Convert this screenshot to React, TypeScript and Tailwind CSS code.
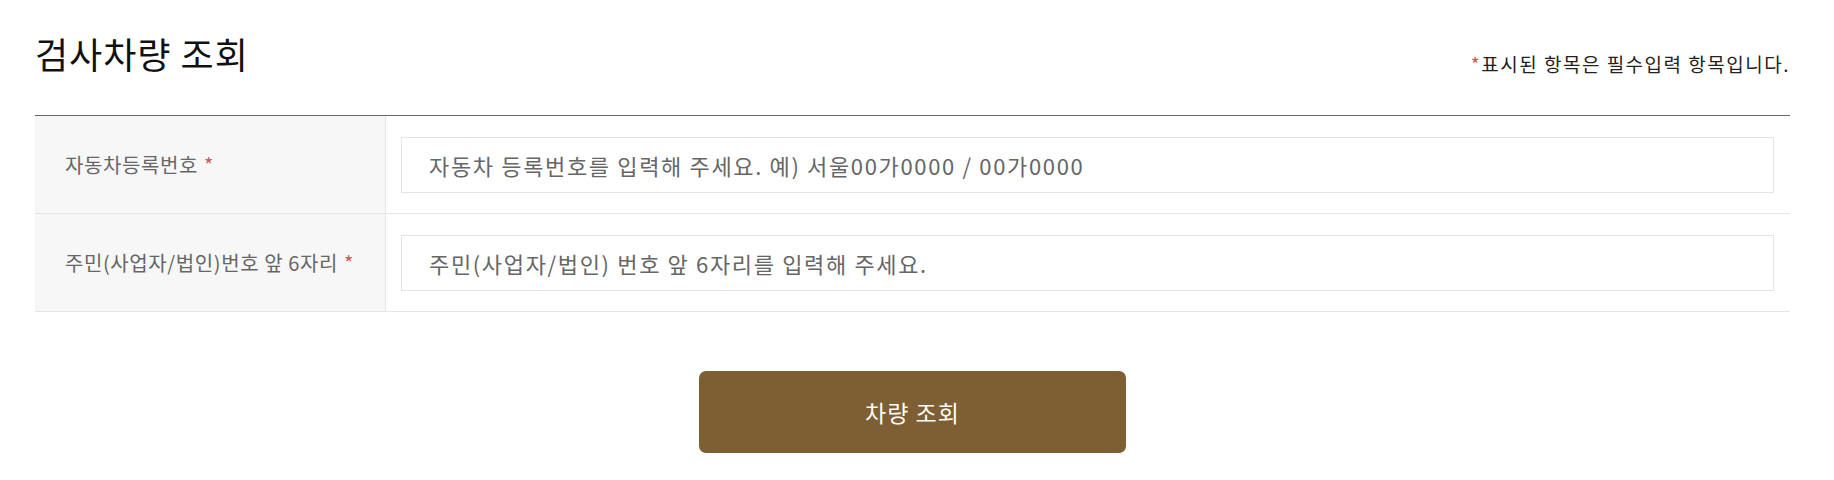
export default function App() {
  const font = { fontFamily: '"Noto Sans CJK KR", "Noto Sans", sans-serif' };

  const rows = [
    {
      label: "자동차등록번호",
      placeholder: "자동차 등록번호를 입력해 주세요. 예) 서울00가0000 / 00가0000",
    },
    {
      label: "주민(사업자/법인)번호 앞 6자리",
      placeholder: "주민(사업자/법인) 번호 앞 6자리를 입력해 주세요.",
    },
  ];

  return (
    <div className="w-[1834px] h-[480px] bg-white" style={font}>
      <div className="ml-[35px] w-[1755px] pt-[30px]">
        {/* Header */}
        <div className="flex items-start justify-between h-[85px]">
          <h2 className="text-[36px] leading-[46px] text-[#111] font-normal tracking-[1px]">검사차량 조회</h2>
          <p className="mt-[20px] text-[19px] leading-[28px] text-[#222] tracking-[1.5px]">
            <span className="text-[#d9534f]">*</span>표시된 항목은 필수입력 항목입니다.
          </p>
        </div>

        {/* Form table */}
        <div className="border-t border-[#666]">
          {rows.map((row) => (
            <div key={row.label} className="flex h-[98px] border-b border-[#e6e6e6]">
              <div className="w-[351px] shrink-0 bg-[#f7f7f7] border-r border-[#e6e6e6] flex items-center pl-[30px] text-[20px] text-[#666] tracking-[0.6px]">
                {row.label}
                <span className="text-[#d9534f] ml-[6px]">*</span>
              </div>
              <div className="flex-1 flex items-center pl-[15px] pr-[16px]">
                <input
                  type="text"
                  placeholder={row.placeholder}
                  className="w-full h-[56px] border border-[#e4e4e4] bg-white px-[27px] text-[22px] tracking-[1.65px] text-[#333] placeholder:text-[#666] outline-none"
                  style={font}
                />
              </div>
            </div>
          ))}
        </div>

        {/* Submit */}
        <div className="flex justify-center pt-[59px]">
          <button className="w-[427px] h-[82px] rounded-[7px] bg-[#7e5e33] text-[#fdfaf3] text-[23px] tracking-[1px]" style={font}>
            차량 조회
          </button>
        </div>
      </div>
    </div>
  );
}
